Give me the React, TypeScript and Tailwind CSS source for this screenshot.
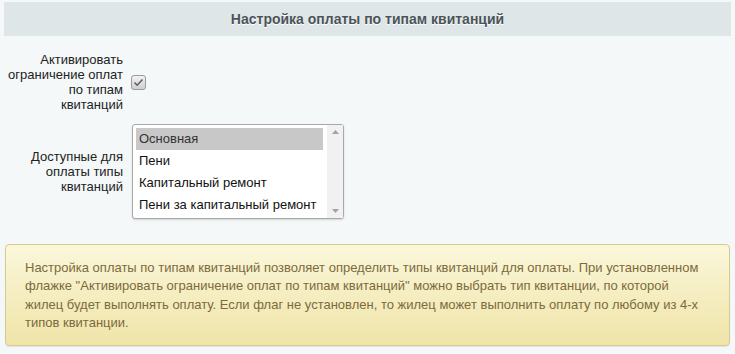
import React from 'react';

const options = ['Основная', 'Пени', 'Капитальный ремонт', 'Пени за капитальный ремонт'];

const PaymentTypesSettings: React.FC = () => {
  return (
    <div className="w-[735px] h-[354px] bg-[#f4f8f8] pt-[2px] px-[4px] font-[family-name:'Liberation_Sans',Arial,sans-serif] text-[13px] text-[#222] overflow-hidden">
      {/* Header */}
      <div className="h-[34px] bg-[#dfe6e7] flex items-center justify-center">
        <h2 className="font-bold text-[14px] text-[#4a5459] [text-shadow:0_1px_0_#fff]">
          Настройка оплаты по типам квитанций
        </h2>
      </div>

      {/* Checkbox row */}
      <div className="flex items-center gap-[8px] mt-[16px]">
        <label className="w-[119px] text-right leading-[15px]">
          Активировать ограничение оплат по типам квитанций
        </label>
        <span className="w-[15px] h-[15px] rounded-[3px] border border-[#9a9a9a] bg-gradient-to-b from-[#f2f2f2] to-[#cfcfcf] flex items-center justify-center">
          <svg width="11" height="9" viewBox="0 0 11 9" fill="none">
            <path d="M1.5 4.5 L4.2 7.2 L9.5 1.5" stroke="#5f5f5f" strokeWidth="1.6" />
          </svg>
        </span>
      </div>

      {/* Select row */}
      <div className="flex items-center gap-[9px] mt-[12px]">
        <label className="w-[119px] text-right leading-[15px]">
          Доступные для оплаты типы квитанций
        </label>
        <div className="w-[212px] h-[95px] bg-white border border-[#a9a9a9] rounded-[3px] shadow-[0_1px_2px_rgba(0,0,0,0.15)] flex">
          <div className="flex-1 p-[3px] pr-[4px]">
            {options.map((o, i) => (
              <div
                key={o}
                className={`h-[22px] leading-[22px] pl-[3px] whitespace-nowrap ${i === 0 ? 'bg-[#c8c8c8] text-[#333]' : 'text-[#111]'}`}
              >
                {o}
              </div>
            ))}
          </div>
          <div className="w-[16px] bg-[#f1f1f1] flex flex-col items-center justify-between py-[5px]">
            <svg width="7" height="4" viewBox="0 0 7 4"><path d="M0 4 L3.5 0 L7 4 Z" fill="#a3a3a3" /></svg>
            <svg width="7" height="4" viewBox="0 0 7 4"><path d="M0 0 L3.5 4 L7 0 Z" fill="#a3a3a3" /></svg>
          </div>
        </div>
      </div>

      {/* Info box */}
      <div className="mt-[25px] ml-[1px] w-[725px] h-[102px] rounded-[4px] border border-[#d8c98d] bg-gradient-to-b from-[#fbf7da] to-[#efe4a8] shadow-[0_1px_1px_rgba(0,0,0,0.08)] px-[19px] pt-[14px] text-[13px] leading-[18.4px] text-[#7c6a3c]">
        Настройка оплаты по типам квитанций позволяет определить типы квитанций для оплаты. При установленном флажке "Активировать ограничение оплат по типам квитанций" можно выбрать тип квитанции, по которой жилец будет выполнять оплату. Если флаг не установлен, то жилец может выполнить оплату по любому из 4-х типов квитанции.
      </div>
    </div>
  );
};

export default function App() {
  return <PaymentTypesSettings />;
}
